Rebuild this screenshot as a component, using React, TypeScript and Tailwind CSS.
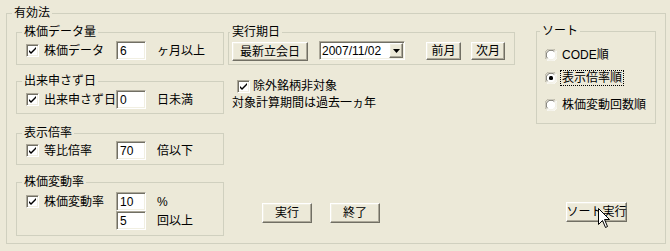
import React from "react";

// classic Win32 3D edges
const raised =
  "border border-t-white border-l-white border-r-[#716F64] border-b-[#716F64] shadow-[inset_-1px_-1px_0_#ACA899,inset_1px_1px_0_#F1EFE2] bg-[#ECE9D8]";
const sunken =
  "border border-t-[#ACA899] border-l-[#ACA899] border-r-white border-b-white shadow-[inset_1px_1px_0_#716F64,inset_-1px_-1px_0_#F1EFE2] bg-white";

function GroupBox({
  title,
  legendClass,
  className,
  children,
}: {
  title: string;
  legendClass: string;
  className: string;
  children?: React.ReactNode;
}) {
  return (
    <fieldset className={`border border-[#D0D0BF] min-w-0 ${className}`}>
      <legend className={`px-[2px] leading-[14px] ${legendClass}`}>{title}</legend>
      {children}
    </fieldset>
  );
}

function Btn({ label, className }: { label: string; className: string }) {
  return (
    <div
      className={`${raised} flex items-center justify-center leading-[14px] whitespace-nowrap overflow-visible shrink-0 ${className}`}
    >
      {label}
    </div>
  );
}

function TextBox({ value }: { value: string }) {
  return (
    <div className={`${sunken} w-[30px] h-[19px] pl-[3px] flex items-center shrink-0 leading-[14px]`}>
      {value}
    </div>
  );
}

function CheckBox() {
  return (
    <span className={`${sunken} w-[13px] h-[13px] flex items-center justify-center shrink-0`}>
      <svg width="9" height="9" viewBox="0 0 9 9">
        <path d="M1 4 L3 6 L8 1 L8 3 L3 8 L1 6 Z" fill="#000" />
      </svg>
    </span>
  );
}

function Radio({ checked }: { checked?: boolean }) {
  return (
    <svg width="12" height="12" viewBox="0 0 12 12" className="shrink-0">
      <circle cx="6" cy="6" r="5.5" fill="#fff" />
      <path d="M1.5 10.5 A5.5 5.5 0 0 1 10.5 1.5" stroke="#ACA899" fill="none" />
      <path d="M10.5 1.5 A5.5 5.5 0 0 1 1.5 10.5" stroke="#fff" fill="none" />
      <path d="M2.6 9.4 A4.5 4.5 0 0 1 9.4 2.6" stroke="#716F64" fill="none" />
      <path d="M9.4 2.6 A4.5 4.5 0 0 1 2.6 9.4" stroke="#F1EFE2" fill="none" />
      {checked && <rect x="4" y="4" width="4" height="4" rx="1.5" fill="#000" />}
    </svg>
  );
}

function CheckRow({ label, value, unit }: { label: string; value: string; unit: string }) {
  return (
    <div className="flex items-center h-[19px]">
      <CheckBox />
      <span className="ml-[5px] w-[72px] shrink-0 leading-[14px] whitespace-nowrap">{label}</span>
      <TextBox value={value} />
      <span className="ml-[11px] leading-[14px]">{unit}</span>
    </div>
  );
}

export default function App() {
  return (
    <div className="relative w-[670px] h-[251px] overflow-hidden bg-[#ECE9D8] text-black text-[12px] leading-[14px] font-['Liberation_Sans','Noto_Sans_CJK_JP',sans-serif] pt-[6px] pl-[6px]">
      <GroupBox title="有効法" legendClass="ml-[5px]" className="w-[660px] h-[238px]">
        <div className="flex pt-[5px] pl-[9px]">
          {/* left column */}
          <div className="flex flex-col w-[208px] shrink-0">
            <GroupBox title="株価データ量" legendClass="ml-[5px]" className="h-[40px]">
              <div className="pl-[9px] pt-[2px]">
                <CheckRow label="株価データ" value="6" unit="ヶ月以上" />
              </div>
            </GroupBox>
            <GroupBox title="出来申さず日" legendClass="ml-[5px]" className="h-[40px] mt-[9px]">
              <div className="pl-[9px] pt-[2px]">
                <CheckRow label="出来申さず日" value="0" unit="日未満" />
              </div>
            </GroupBox>
            <GroupBox title="表示倍率" legendClass="ml-[5px]" className="h-[39px] mt-[12px]">
              <div className="pl-[9px] pt-[1px]">
                <CheckRow label="等比倍率" value="70" unit="倍以下" />
              </div>
            </GroupBox>
            <GroupBox title="株価変動率" legendClass="ml-[5px]" className="h-[61px] mt-[10px]">
              <div className="pl-[9px] pt-[3px]">
                <CheckRow label="株価変動率" value="10" unit="%" />
                <div className="flex items-center h-[19px] ml-[90px]">
                  <TextBox value="5" />
                  <span className="ml-[11px]">回以上</span>
                </div>
              </div>
            </GroupBox>
          </div>

          {/* middle column */}
          <div className="flex flex-col w-[287px] ml-[4px] shrink-0">
            <GroupBox title="実行期日" legendClass="ml-[1px]" className="h-[40px]">
              <div className="flex items-start pl-[3px] pt-[2px]">
                <Btn label="最新立会日" className="w-[76px] h-[19px] mt-[1px]" />
                <div className={`${sunken} ml-[11px] w-[86px] h-[19px] flex items-center shrink-0`}>
                  <span className="pl-[2px] flex-1">2007/11/02</span>
                  <div className={`${raised} w-[14px] h-[15px] mr-[1px] flex items-center justify-center`}>
                    <svg width="7" height="4" viewBox="0 0 7 4">
                      <path d="M0 0 H7 L3.5 4 Z" fill="#000" />
                    </svg>
                  </div>
                </div>
                <Btn label="前月" className="w-[35px] h-[18px] mt-[1px] ml-[21px]" />
                <Btn label="次月" className="w-[34px] h-[18px] mt-[1px] ml-[10px]" />
              </div>
            </GroupBox>
            <div className="flex items-center mt-[14px] ml-[9px]">
              <CheckBox />
              <span className="ml-[3px]">除外銘柄非対象</span>
            </div>
            <div className="mt-[3px] ml-[4px]">対象計算期間は過去一ヵ年</div>
            <div className="flex gap-[18px] mt-[93px] ml-[34px]">
              <Btn label="実行" className="w-[50px] h-[20px]" />
              <Btn label="終了" className="w-[50px] h-[20px]" />
            </div>
          </div>

          {/* right column */}
          <div className="flex flex-col w-[120px] ml-[21px] shrink-0">
            <GroupBox title="ソート" legendClass="ml-[3px]" className="h-[100px] -mt-[1px]">
              <div className="flex flex-col pl-[8px]">
                <div className="flex items-center h-[16px] mt-[9px]">
                  <Radio />
                  <span className="ml-[5px]">CODE順</span>
                </div>
                <div className="flex items-center h-[16px] mt-[7px]">
                  <Radio checked />
                  <span className="ml-[3px] px-[1px] border border-dotted border-black">表示倍率順</span>
                </div>
                <div className="flex items-center h-[16px] mt-[11px]">
                  <Radio />
                  <span className="ml-[5px] whitespace-nowrap">株価変動回数順</span>
                </div>
              </div>
            </GroupBox>
            <Btn label="ソート実行" className="w-[61px] h-[20px] mt-[78px] ml-[30px]" />
          </div>
        </div>
      </GroupBox>

      {/* mouse pointer over the sort button */}
      <svg
        width="13"
        height="21"
        viewBox="0 0 13 21"
        className="absolute left-[598px] top-[208px] pointer-events-none"
      >
        <path
          d="M0.5 0.5 L0.5 16.5 L4.5 12.5 L7.5 19.5 L9.5 18.5 L6.5 11.5 L11.5 11.5 Z"
          fill="#fff"
          stroke="#000"
          strokeLinejoin="miter"
        />
      </svg>
    </div>
  );
}
